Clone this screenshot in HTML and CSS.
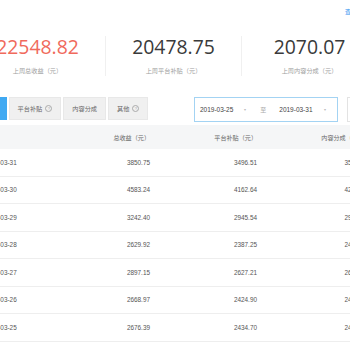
FILE: index.html
```html
<!DOCTYPE html>
<html lang="zh-CN">
<head>
<meta charset="utf-8">
<title>收益统计</title>
<link rel="stylesheet" href="styles.css">
</head>
<body>
<div class="page">
  <div class="topbar"><a class="help-link">查看说明</a></div>

  <div class="stats">
    <div class="stat">
      <div class="stat-num red">22548.82</div>
      <div class="stat-label">上周总收益（元）</div>
    </div>
    <div class="stat">
      <div class="stat-num">20478.75</div>
      <div class="stat-label">上周平台补贴（元）</div>
    </div>
    <div class="stat">
      <div class="stat-num">2070.07</div>
      <div class="stat-label">上周内容分成（元）</div>
    </div>
  </div>

  <div class="toolbar">
    <div class="tabs">
      <div class="tab active">总收益</div>
      <div class="tab">平台补贴<span class="q">?</span></div>
      <div class="tab">内容分成</div>
      <div class="tab">其他<span class="q">?</span></div>
    </div>
    <div class="range">
      <span class="date">2019-03-25</span><span class="caret">▾</span>
      <span class="to">至</span>
      <span class="date">2019-03-31</span><span class="caret">▾</span>
    </div>
    <div class="export"></div>
  </div>

  <div class="table">
    <div class="row head">
      <div class="cell first">日期</div>
      <div class="cell">总收益（元）</div>
      <div class="cell">平台补贴（元）</div>
      <div class="cell">内容分成（元）</div>
    </div>
    <div class="row"><div class="cell first">2019-03-31</div><div class="cell">3850.75</div><div class="cell">3496.51</div><div class="cell">354.24</div></div>
    <div class="row"><div class="cell first">2019-03-30</div><div class="cell">4583.24</div><div class="cell">4162.64</div><div class="cell">420.60</div></div>
    <div class="row"><div class="cell first">2019-03-29</div><div class="cell">3242.40</div><div class="cell">2945.54</div><div class="cell">296.86</div></div>
    <div class="row"><div class="cell first">2019-03-28</div><div class="cell">2629.92</div><div class="cell">2387.25</div><div class="cell">242.67</div></div>
    <div class="row"><div class="cell first">2019-03-27</div><div class="cell">2897.15</div><div class="cell">2627.21</div><div class="cell">269.94</div></div>
    <div class="row"><div class="cell first">2019-03-26</div><div class="cell">2668.97</div><div class="cell">2424.90</div><div class="cell">244.07</div></div>
    <div class="row"><div class="cell first">2019-03-25</div><div class="cell">2676.39</div><div class="cell">2434.70</div><div class="cell">241.69</div></div>
  </div>
</div>
</body>
</html>
```

FILE: styles.css
```css
html, body {
  margin: 0;
  padding: 0;
  background: #fff;
  overflow: hidden;
}
body {
  width: 350px;
  height: 350px;
  font-family: "Liberation Sans", "Noto Sans CJK SC", sans-serif;
  color: #555;
}
.page {
  margin-left: -30px;
  width: 410px;
}
.topbar {
  height: 25px;
  display: flex;
  justify-content: flex-end;
  padding-right: 11px;
}
.help-link {
  font-size: 6px;
  line-height: 25px;
  color: #1e90f0;
}
.stats {
  display: flex;
  margin-top: 11px;
}
.stat {
  width: 135px;
  height: 40px;
  display: flex;
  flex-direction: column;
  align-items: center;
}
.stat + .stat {
  border-left: 1px solid #f0f0f0;
}
.stat-num {
  font-family: "Open Sans", "Liberation Sans", sans-serif;
  font-weight: 400;
  font-size: 19.4px;
  line-height: 22px;
  color: #3a3a3a;
  white-space: nowrap;
}
.stat-num.red {
  color: #f06a5c;
}
.stat-label {
  margin-top: 8px;
  font-size: 6.2px;
  line-height: 10px;
  color: #a0a0a0;
  white-space: nowrap;
}
.toolbar {
  display: flex;
  align-items: flex-start;
  margin-top: 21px;
}
.tabs {
  display: flex;
  gap: 2px;
  width: 173px;
  flex: none;
}
.tab {
  height: 23px;
  box-sizing: border-box;
  padding: 0 8px;
  display: flex;
  align-items: center;
  font-size: 6.2px;
  color: #666;
  background: #f0f0f0;
  border: 1px solid #e8e8e8;
  white-space: nowrap;
}
.tab.active {
  background: #40a9f2;
  border-color: #40a9f2;
  color: #fff;
}
.q {
  display: inline-flex;
  align-items: center;
  justify-content: center;
  width: 5px;
  height: 5px;
  margin-left: 3px;
  border: 0.6px solid #aaa;
  border-radius: 50%;
  font-size: 4px;
  line-height: 1;
  color: #aaa;
}
.range {
  margin-left: 51px;
  width: 144px;
  flex: none;
  height: 25px;
  box-sizing: border-box;
  border: 1px solid #a3d3f3;
  display: flex;
  align-items: center;
  padding-left: 5px;
  font-size: 6.5px;
  color: #444;
  white-space: nowrap;
}
.caret {
  margin-left: 11px;
  font-size: 4px;
  color: #bbb;
}
.to {
  margin-left: 14px;
  margin-right: 13px;
  font-size: 6px;
  color: #aaa;
}
.export {
  margin-left: 9px;
  width: 40px;
  flex: none;
  height: 25px;
  box-sizing: border-box;
  border: 1px solid #e3e3e3;
}
.table {
  margin-top: 3px;
}
.row {
  display: grid;
  grid-template-columns: 73px 107px 107px 107px;
  height: 27.5px;
  box-sizing: border-box;
  border-bottom: 1px solid #eeeeee;
  align-items: center;
  font-size: 6.4px;
  color: #555;
}
.row.head {
  height: 24px;
  background: #f5f6f7;
  border-bottom: none;
  color: #666;
  font-size: 6.1px;
}
.cell {
  text-align: right;
  white-space: nowrap;
}
.cell.first {
  text-align: left;
  padding-left: 14px;
}
```
